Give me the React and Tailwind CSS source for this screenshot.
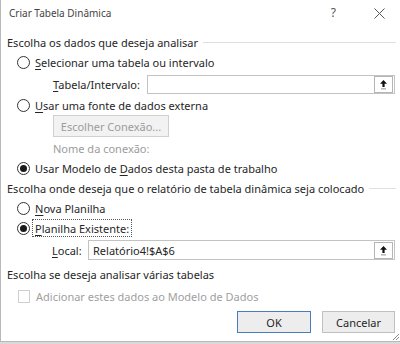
import React from 'react'

const font = { fontFamily: '"Noto Sans", "Open Sans", Arial, sans-serif' }

function Radio({ checked }) {
  return (
    <span className="w-[13px] h-[13px] rounded-full border border-[#333333] bg-white flex items-center justify-center shrink-0">
      {checked && <span className="w-[7px] h-[7px] rounded-full bg-[#1a1a1a]" />}
    </span>
  )
}

function U({ children }) {
  return <span className="underline underline-offset-2">{children}</span>
}

function Header({ children, line }) {
  return (
    <div className="h-[20px] flex items-center pl-[6px] pr-[4px] text-[#262626]">
      <span className="whitespace-nowrap">{children}</span>
      {line && <span className="flex-1 ml-[5px] h-px bg-[#e0e0e0]" />}
    </div>
  )
}

function RefButton() {
  return (
    <span className="w-[19px] h-[17px] mr-px border border-[#b5b5b5] bg-white flex items-center justify-center">
      <svg width="11" height="11" viewBox="0 0 11 11">
        <path d="M5.5 1 L9 4.8 L6.6 4.8 L6.6 8 L4.4 8 L4.4 4.8 L2 4.8 Z" fill="#111" />
        <rect x="3" y="9.5" width="5" height="0.8" fill="#777" />
      </svg>
    </span>
  )
}

export default function App() {
  return (
    <div className="w-[400px] h-[344px] bg-[#d9d9d9] overflow-hidden text-[11px] leading-none" style={font}>
      <div className="relative w-[400px] h-[342px] bg-white border-l border-b border-[#b9b9b9] flex flex-col">
        {/* barra de título */}
        <div className="h-[26px] flex items-center pl-[8px] text-[#444444]">
          <span className="text-[10px]">Criar Tabela Dinâmica</span>
          <span className="ml-auto mr-[38px] text-[#555555] text-[12px]">?</span>
          <svg className="mr-[15px]" width="11" height="11" viewBox="0 0 11 11">
            <path d="M0.5 0.5 L10.5 10.5 M10.5 0.5 L0.5 10.5" stroke="#555" strokeWidth="1" />
          </svg>
        </div>

        <div className="mt-[6px]">
          <Header line>Escolha os dados que deseja analisar</Header>
        </div>

        <div className="mt-[1px] h-[18px] flex items-center pl-[16px] gap-[5px] text-[#262626]">
          <Radio />
          <span><U>S</U>elecionar uma tabela ou intervalo</span>
        </div>

        <div className="mt-[3px] h-[20px] flex items-center pl-[52px] pr-[5px] text-[#262626]">
          <span className="w-[94px]"><U>T</U>abela/Intervalo:</span>
          <div className="flex-1 h-[19px] border border-[#c3c3c3] bg-white flex items-center justify-end">
            <RefButton />
          </div>
        </div>

        <div className="mt-[2px] h-[18px] flex items-center pl-[16px] gap-[5px] text-[#262626]">
          <Radio />
          <span><U>U</U>sar uma fonte de dados externa</span>
        </div>

        <div className="mt-[1px] h-[22px] pl-[52px] flex">
          <div className="w-[116px] h-[22px] border border-[#d0d0d0] bg-[#f2f2f2] text-[#9c9c9c] flex items-center justify-center">
            Escolher Conexão...
          </div>
        </div>

        <div className="mt-[2px] h-[18px] flex items-center pl-[52px] text-[#9c9c9c]">
          Nome da conexão:
        </div>

        <div className="mt-[2px] h-[18px] flex items-center pl-[16px] gap-[5px] text-[#262626]">
          <Radio checked />
          <span>Usar Modelo de <U>D</U>ados desta pasta de trabalho</span>
        </div>

        <div className="mt-[1px]">
          <Header line>Escolha onde deseja que o relatório de tabela dinâmica seja colocado</Header>
        </div>

        <div className="mt-[1px] h-[18px] flex items-center pl-[16px] gap-[5px] text-[#262626]">
          <Radio />
          <span><U>N</U>ova Planilha</span>
        </div>

        <div className="mt-[2px] h-[18px] flex items-center pl-[16px] gap-[2px] text-[#262626]">
          <Radio checked />
          <span className="h-[18px] px-[2px] flex items-center border border-dotted border-[#555555]">
            <U>P</U>lanilha Existente:
          </span>
        </div>

        <div className="mt-[3px] h-[20px] flex items-center pl-[51px] pr-[5px] text-[#262626]">
          <span className="w-[36px]"><U>L</U>ocal:</span>
          <div className="flex-1 h-[20px] border border-[#c3c3c3] bg-white flex items-center pl-[4px]">
            <span>Relatório4!$A$6</span>
            <span className="ml-auto flex">
              <RefButton />
            </span>
          </div>
        </div>

        <div className="mt-[3px] pt-px">
          <Header>Escolha se deseja analisar várias tabelas</Header>
        </div>

        <div className="mt-[3px] h-[18px] flex items-center pl-[17px] gap-[6px] text-[#a0a0a0]">
          <span className="w-[12px] h-[13px] border border-[#cfcfcf] bg-white" />
          <span>Adicionar estes dados ao Modelo de Dados</span>
        </div>

        <div className="mt-[6px] flex justify-end pr-[5px] gap-[11px]">
          <div className="w-[74px] h-[22px] border border-[#4a7cc0] bg-[#ededed] text-[#262626] flex items-center justify-center">
            OK
          </div>
          <div className="w-[73px] h-[22px] border border-[#c0c0c0] bg-[#ededed] text-[#262626] flex items-center justify-center">
            Cancelar
          </div>
        </div>

        {/* alça de redimensionamento */}
        <svg className="absolute right-0 bottom-0" width="9" height="9" viewBox="0 0 9 9">
          <path d="M8 2 L2 8 M8 5 L5 8" stroke="#8a8a8a" strokeWidth="1" />
        </svg>
      </div>
    </div>
  )
}
